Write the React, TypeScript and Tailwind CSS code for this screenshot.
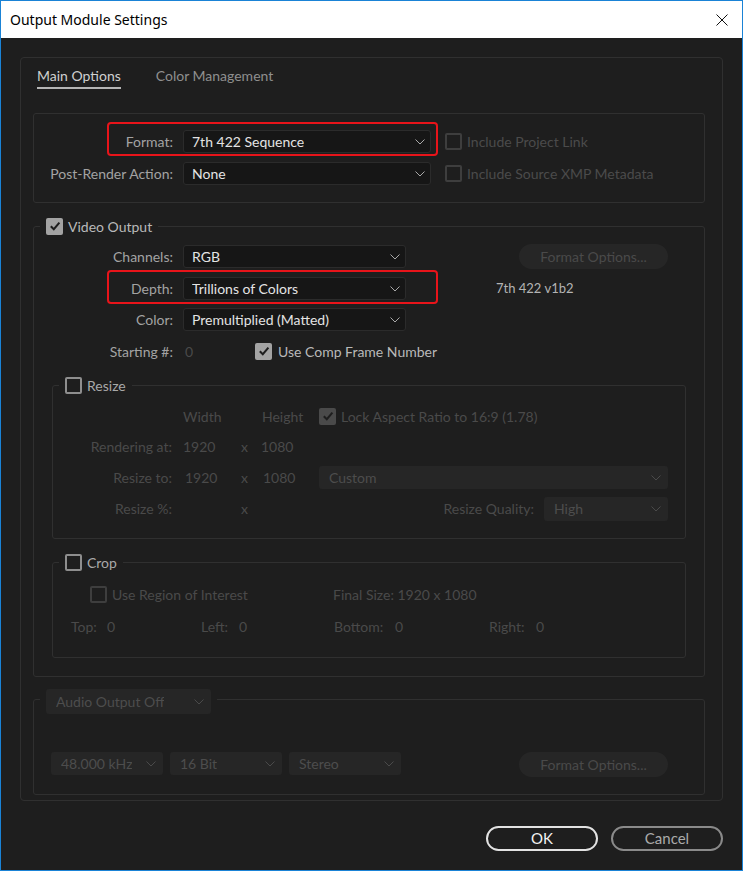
import React from 'react';

type SelectProps = {
  value: string;
  className?: string;
  dim?: boolean;
};

function Chevron({ dim }: { dim?: boolean }) {
  return (
    <svg width="10" height="6" viewBox="0 0 10 6" className={dim ? 'shrink-0 text-[#4a4a4a]' : 'shrink-0 text-[#a8a8a8]'}>
      <path d="M0.5 0.5 L5 5 L9.5 0.5" fill="none" stroke="currentColor" strokeWidth="1" />
    </svg>
  );
}

function Select({ value, className = '', dim }: SelectProps) {
  return (
    <div
      className={`flex shrink-0 items-center justify-between rounded-[3px] ${
        dim ? 'bg-[#262626] pl-[10px] pr-[7px] text-[#4d4d4d]' : 'border border-[#2b2b2b] bg-[#161616] pl-[8px] pr-[5px] text-[#e4e4e4]'
      } ${className}`}
    >
      <span className="truncate">{value}</span>
      <Chevron dim={dim} />
    </div>
  );
}

function Check({ checked, dim, className = '' }: { checked?: boolean; dim?: boolean; className?: string }) {
  if (checked) {
    return (
      <span
        className={`flex h-[17px] w-[17px] shrink-0 items-center justify-center rounded-[2px] ${
          dim ? 'bg-[#4a4a4a]' : 'bg-[#a3a3a3]'
        } ${className}`}
      >
        <svg width="12" height="12" viewBox="0 0 12 12">
          <path d="M1.8 6.2 L4.8 9.2 L10.4 2.6" fill="none" stroke="#1e1e1e" strokeWidth="2" />
        </svg>
      </span>
    );
  }
  return (
    <span
      className={`h-[17px] w-[17px] shrink-0 rounded-[2px] border-2 ${dim ? 'border-[#3e3e3e]' : 'border-[#8e8e8e]'} ${className}`}
    />
  );
}

function PillButton({ label }: { label: string }) {
  return (
    <div className="flex h-[25px] w-[149px] shrink-0 items-center justify-center rounded-full bg-[#262626] text-[#4a4a4a]">
      {label}
    </div>
  );
}

function Legend({ children, className = '' }: { children: React.ReactNode; className?: string }) {
  return (
    <div className={`ml-[6px] flex w-fit items-center gap-[5px] bg-[#1e1e1e] px-[6px] ${className}`}>{children}</div>
  );
}

export default function App() {
  return (
    <div className="flex h-[871px] w-[743px] flex-col border border-[#1a83d6] bg-[#1e1e1e] font-['Lato',sans-serif] text-[14px]">
      {/* title bar */}
      <div className="flex h-[37px] shrink-0 items-center justify-between bg-white pl-[9px] pr-[14px]">
        <span className="font-['Noto_Sans',sans-serif] text-[14px] text-black">Output Module Settings</span>
        <svg width="12" height="12" viewBox="0 0 12 12">
          <path d="M0.5 0.5 L11.5 11.5 M11.5 0.5 L0.5 11.5" stroke="#111" strokeWidth="1" />
        </svg>
      </div>

      <div className="flex flex-1 flex-col px-[19px] pb-[18px] pt-[19px]">
        <div className="rounded-[4px] border border-[#303030] pb-[5px]">
          {/* tabs */}
          <div className="flex gap-[35px] pl-[16px] pt-[8px]">
            <div className="flex flex-col">
              <span className="leading-[20px] text-[#d0d0d0]">Main Options</span>
              <span className="mt-[1px] h-[2px] bg-[#b5b5b5]" />
            </div>
            <span className="leading-[20px] text-[#8f8f8f]">Color Management</span>
          </div>

          {/* format */}
          <div className="ml-[12px] mr-[17px] mt-[24px] rounded-[3px] border border-[#303030] pb-[17px] pt-[16px]">
            <div className="relative flex h-[23px] items-center">
              <div className="pointer-events-none absolute left-[73px] top-[-8px] h-[34px] w-[331px] rounded-[4px] border-2 border-[#e8141a]" />
              <span className="w-[139px] text-right text-[#a3a3a3]">Format:</span>
              <Select value="7th 422 Sequence" className="ml-[10px] h-[23px] w-[248px]" />
              <Check dim className="ml-[14px]" />
              <span className="ml-[5px] text-[#4b4b4b]">Include Project Link</span>
            </div>
            <div className="mt-[9px] flex h-[23px] items-center">
              <span className="w-[139px] text-right text-[#a3a3a3]">Post-Render Action:</span>
              <Select value="None" className="ml-[10px] h-[23px] w-[248px]" />
              <Check dim className="ml-[14px]" />
              <span className="ml-[5px] text-[#4b4b4b]">Include Source XMP Metadata</span>
            </div>
          </div>

          {/* video output */}
          <div className="ml-[12px] mr-[17px] mt-[23px] rounded-[3px] border border-[#303030] pb-[18px]">
            <Legend className="-mt-[10px] h-[18px]">
              <Check checked />
              <span className="text-[#b9b9b9]">Video Output</span>
            </Legend>

            <div className="mt-[10px] flex h-[23px] items-center">
              <span className="w-[139px] text-right text-[#a3a3a3]">Channels:</span>
              <Select value="RGB" className="ml-[10px] h-[23px] w-[223px]" />
              <div className="ml-[113px]">
                <PillButton label="Format Options..." />
              </div>
            </div>
            <div className="relative mt-[9px] flex h-[23px] items-center">
              <div className="pointer-events-none absolute left-[73px] top-[-7px] h-[34px] w-[331px] rounded-[4px] border-2 border-[#e8141a]" />
              <span className="w-[139px] text-right text-[#a3a3a3]">Depth:</span>
              <Select value="Trillions of Colors" className="ml-[10px] h-[23px] w-[223px]" />
              <span className="ml-[90px] text-[13px] text-[#b4b4b4]">7th 422 v1b2</span>
            </div>
            <div className="mt-[8px] flex h-[23px] items-center">
              <span className="w-[139px] text-right text-[#a3a3a3]">Color:</span>
              <Select value="Premultiplied (Matted)" className="ml-[10px] h-[23px] w-[223px]" />
            </div>
            <div className="mt-[9px] flex h-[22px] items-center">
              <span className="w-[139px] text-right text-[#a3a3a3]">Starting #:</span>
              <span className="ml-[12px] w-[70px] text-[#4a4a4a]">0</span>
              <Check checked />
              <span className="ml-[6px] text-[#b9b9b9]">Use Comp Frame Number</span>
            </div>

            {/* resize */}
            <div className="ml-[18px] mr-[18px] mt-[23px] rounded-[3px] border border-[#303030] pb-[18px] text-[#4a4a4a]">
              <Legend className="-mt-[10px] h-[18px]">
                <Check />
                <span className="text-[#a9a9a9]">Resize</span>
              </Legend>
              <div className="mt-[12px] flex h-[20px] items-center">
                <span className="w-[130px]" />
                <span className="w-[79px]">Width</span>
                <span className="w-[57px]">Height</span>
                <Check checked dim />
                <span className="ml-[5px]">Lock Aspect Ratio to 16:9 (1.78)</span>
              </div>
              <div className="mt-[10px] flex h-[20px] items-center">
                <span className="w-[119px] text-right">Rendering at:</span>
                <span className="ml-[11px] w-[58px]">1920</span>
                <span className="w-[20px]">x</span>
                <span>1080</span>
              </div>
              <div className="mt-[10px] flex h-[23px] items-center pr-[17px]">
                <span className="w-[119px] text-right">Resize to:</span>
                <span className="ml-[11px] w-[58px] pl-[2px]">1920</span>
                <span className="w-[20px]">x</span>
                <span className="w-[58px] pl-[2px]">1080</span>
                <Select dim value="Custom" className="h-[23px] flex-1" />
              </div>
              <div className="mt-[8px] flex h-[23px] items-center pr-[17px]">
                <span className="w-[119px] text-right">Resize %:</span>
                <span className="ml-[11px] w-[58px]" />
                <span className="w-[20px]">x</span>
                <div className="flex flex-1 items-center justify-end">
                  <span>Resize Quality:</span>
                  <Select dim value="High" className="ml-[10px] h-[24px] w-[124px]" />
                </div>
              </div>
            </div>

            {/* crop */}
            <div className="ml-[18px] mr-[18px] mt-[23px] rounded-[3px] border border-[#303030] pb-[21px] text-[#4a4a4a]">
              <Legend className="-mt-[10px] h-[18px]">
                <Check />
                <span className="text-[#a9a9a9]">Crop</span>
              </Legend>
              <div className="mt-[13px] flex h-[20px] items-center pl-[37px]">
                <div className="flex w-[243px] items-center">
                  <Check dim />
                  <span className="ml-[5px]">Use Region of Interest</span>
                </div>
                <span>Final Size: 1920 x 1080</span>
              </div>
              <div className="mt-[12px] flex h-[20px] items-center pl-[18px]">
                <div className="flex w-[130px]">
                  <span className="w-[36px]">Top:</span>
                  <span>0</span>
                </div>
                <div className="flex w-[133px]">
                  <span className="w-[38px]">Left:</span>
                  <span>0</span>
                </div>
                <div className="flex w-[155px]">
                  <span className="w-[61px]">Bottom:</span>
                  <span>0</span>
                </div>
                <div className="flex">
                  <span className="w-[47px]">Right:</span>
                  <span>0</span>
                </div>
              </div>
            </div>
          </div>

          {/* audio */}
          <div className="ml-[12px] mr-[17px] mt-[22px] rounded-[3px] border border-[#303030] pb-[17px]">
            <Legend className="-mt-[11px] h-[25px]">
              <Select dim value="Audio Output Off" className="h-[25px] w-[165px]" />
            </Legend>
            <div className="mt-[38px] flex items-start pl-[17px]">
              <Select dim value="48.000 kHz" className="h-[23px] w-[112px]" />
              <Select dim value="16 Bit" className="ml-[7px] h-[23px] w-[112px]" />
              <Select dim value="Stereo" className="ml-[7px] h-[23px] w-[112px]" />
              <div className="ml-[118px]">
                <PillButton label="Format Options..." />
              </div>
            </div>
          </div>
        </div>

        {/* buttons */}
        <div className="mt-[25px] flex justify-end gap-[13px]">
          <button className="flex h-[25px] w-[112px] items-center justify-center rounded-full border-2 border-[#e2e2e2] text-[15px] text-[#f2f2f2]">
            OK
          </button>
          <button className="flex h-[25px] w-[112px] items-center justify-center rounded-full border-2 border-[#8a8a8a] text-[15px] text-[#aaaaaa]">
            Cancel
          </button>
        </div>
      </div>
    </div>
  );
}
